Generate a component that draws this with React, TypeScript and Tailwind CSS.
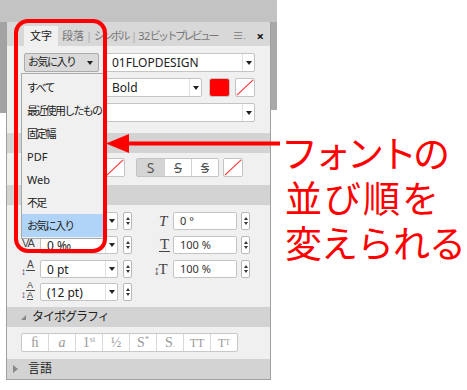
import React from "react";

const Caret = () => (
  <span className="block w-0 h-0 border-x-[3px] border-x-transparent border-t-[4px] border-t-[#222]" />
);

const Stepper = () => (
  <div className="w-[9px] h-[18px] rounded-[2px] border border-[#b8b8b8] bg-white flex flex-col items-center justify-center gap-[2px]">
    <span className="w-0 h-0 border-x-[2.5px] border-x-transparent border-b-[3px] border-b-[#333]" />
    <span className="w-0 h-0 border-x-[2.5px] border-x-transparent border-t-[3px] border-t-[#333]" />
  </div>
);

function Select({ value, className }: { value?: string; className: string }) {
  return (
    <div
      className={`flex bg-white border border-[#c4c4c4] rounded-[2px] ${className}`}
    >
      <div className="flex-1 pl-[6px] text-[12px] leading-[17px] text-[#222] whitespace-nowrap overflow-hidden">
        {value}
      </div>
      <div className="w-[12px] border-l border-[#e0e0e0] flex items-center justify-center">
        <Caret />
      </div>
    </div>
  );
}

function Field({ value }: { value: string }) {
  return (
    <div className="w-[64px] h-[18px] bg-white border border-[#c4c4c4] rounded-[2px] pl-[6px] text-[11px] leading-[16px] text-[#333]">
      {value}
    </div>
  );
}

function NoColor({ className }: { className: string }) {
  return (
    <div
      className={`relative bg-white border border-[#c4c4c4] rounded-[2px] overflow-hidden ${className}`}
    >
      <svg className="absolute inset-0 w-full h-full" preserveAspectRatio="none" viewBox="0 0 20 20">
        <line x1="1" y1="19" x2="19" y2="1" stroke="#ff3030" strokeWidth="1.2" />
      </svg>
    </div>
  );
}

function SectionHeader({ title, open }: { title: string; open?: boolean }) {
  return (
    <div className="h-[20px] bg-[#d3d3d3] flex items-center text-[12px] text-[#222]">
      {open ? (
        <span className="ml-[14px] w-0 h-0 border-l-[5px] border-l-transparent border-b-[5px] border-b-[#888]" />
      ) : (
        <span className="ml-[6px] w-0 h-0 border-y-[4px] border-y-transparent border-l-[5px] border-l-[#888]" />
      )}
      <span className={open ? "ml-[6px] tracking-[-1px]" : "ml-[10px]"}>{title}</span>
    </div>
  );
}

export default function App() {
  const fontItems = [
    { label: "すべて", cjk: true },
    { label: "最近使用したもの", cjk: true },
    { label: "固定幅", cjk: true },
    { label: "PDF", cjk: false },
    { label: "Web", cjk: false },
    { label: "不足", cjk: true },
    { label: "お気に入り", cjk: true },
  ];

  return (
    <div className="relative w-[467px] h-[390px] bg-white overflow-hidden font-['Noto_Sans','Noto_Sans_CJK_JP',sans-serif]">
      {/* app chrome above the panel */}
      <div className="w-[277px] h-[22px] bg-[#c3c3c3]" />

      <div className="flex items-start">
        <div className="w-[6px] h-[91px] bg-[#a3a3a3]" />

        {/* character panel */}
        <div className="w-[265px] h-[358px] border-x border-b border-[#a0a0a0] bg-[#f0f0f0] flex flex-col">
          {/* tabs */}
          <div className="h-[24px] bg-[#d8d8d8] flex items-end text-[11px] whitespace-nowrap">
            <div className="ml-[17px] h-[20px] px-[6px] bg-[#f0f0f0] text-[#222] leading-[20px]">文字</div>
            <div className="flex items-center h-[20px] text-[#777] leading-[20px]">
              <span className="ml-[4px]">段落</span>
              <span className="mx-[2px] text-[#aaa]">|</span>
              <span className="tracking-[-2.5px]">シンボル</span>
              <span className="ml-[3px] mr-[1px] text-[#aaa]">|</span>
              <span className="tracking-[-0.5px]">32</span>
              <span className="tracking-[-2.6px]">ビットプレビュー</span>
            </div>
            <div className="ml-auto h-[20px] flex items-center text-[#777] text-[11px]">
              <span>≡</span>
              <span className="text-[8px]">.</span>
            </div>
            <div className="ml-[11px] mr-[6px] h-[20px] leading-[20px] text-[13px] font-bold text-[#111]">×</div>
          </div>

          {/* font family */}
          <div className="mt-[7px] h-[19px] flex">
            <div className="ml-[17px] w-[75px] h-[19px] bg-[#dadada] border border-[#ababab] rounded-[2px] flex items-center pl-[3px] pr-[5px] text-[11px] tracking-[-1.5px] whitespace-nowrap text-[#222]">
              <span>お気に入り</span>
              <span className="ml-auto">
                <Caret />
              </span>
            </div>
            <Select value="01FLOPDESIGN" className="ml-[6px] w-[150px] h-[19px]" />
          </div>

          {/* style + colours */}
          <div className="mt-[6px] h-[19px] flex">
            <Select value="Bold" className="ml-[98px] w-[97px] h-[19px]" />
            <div className="ml-[7px] w-[21px] h-[19px] rounded-[3px] border border-[#c4c4c4] bg-[#ff0000]" />
            <NoColor className="ml-[5px] w-[20px] h-[19px]" />
          </div>

          <div className="mt-[6px] h-[19px] flex">
            <Select className="ml-[98px] w-[150px] h-[19px]" />
          </div>

          <div className="mt-[11px]">
            <SectionHeader title="文字の装飾" open />
          </div>

          <div className="mt-[5px] h-[19px] flex">
            <NoColor className="ml-[98px] w-[20px] h-[19px]" />
            <div className="ml-[11px] flex h-[19px] border border-[#c4c4c4] rounded-[2px] text-[14px] text-[#555]">
              <div className="w-[27px] bg-[#d4d4d4] flex items-center justify-center">S</div>
              <div className="w-[27px] bg-white border-l border-[#d0d0d0] flex items-center justify-center relative">
                S<span className="absolute left-[9px] right-[9px] top-[9px] h-px bg-[#555]" />
              </div>
              <div className="w-[27px] bg-white border-l border-[#d0d0d0] flex items-center justify-center relative">
                S
                <span className="absolute left-[9px] right-[9px] top-[7px] h-px bg-[#555]" />
                <span className="absolute left-[9px] right-[9px] top-[10px] h-px bg-[#555]" />
              </div>
            </div>
            <NoColor className="ml-[4px] w-[20px] h-[19px]" />
          </div>

          <div className="mt-[8px]">
            <SectionHeader title="文字の間隔" open />
          </div>

          {/* spacing rows */}
          {[
            { l: "", r: "0 °" },
            { l: "0 ‰", r: "100 %" },
            { l: "0 pt", r: "100 %" },
            { l: "(12 pt)", r: "" },
          ].map((row, i) => (
            <div key={i} className={`${i === 3 ? "mt-[5px]" : i === 0 ? "mt-[7px]" : "mt-[6px]"} h-[18px] flex items-center`}>
              <div className="ml-[10px] w-[23px] h-[18px] relative text-[#444] font-['Liberation_Serif',serif]">
                {i === 1 && (
                  <>
                    <span className="absolute left-[5px] top-[-1px] text-[11px] font-['Liberation_Sans',sans-serif] tracking-[-1px]">VA</span>
                    <span className="absolute left-[5px] top-[14px] w-[13px] h-px bg-[#444]" />
                  </>
                )}
                {i === 2 && (
                  <>
                    <span className="absolute left-[4px] top-[4px] text-[10px]">↕</span>
                    <span className="absolute left-[10px] top-[-3px] text-[10px] font-['Liberation_Sans',sans-serif]">A</span>
                    <span className="absolute left-[9px] top-[10px] w-[9px] h-px bg-[#444]" />
                  </>
                )}
                {i === 3 && (
                  <>
                    <span className="absolute left-[4px] top-[4px] text-[10px]">↕</span>
                    <span className="absolute left-[10px] top-[-4px] text-[9px] font-['Liberation_Sans',sans-serif]">A</span>
                    <span className="absolute left-[9px] top-[7px] w-[9px] h-px bg-[#444]" />
                    <span className="absolute left-[10px] top-[6px] text-[9px] font-['Liberation_Sans',sans-serif] underline">A</span>
                  </>
                )}
              </div>
              <Select value={row.l} className="w-[78px] h-[18px]" />
              <div className="ml-[5px]">
                <Stepper />
              </div>
              {row.r && (
                <>
                  <div className="ml-[27px] w-[14px] h-[18px] relative text-[15px] text-[#444] font-['Liberation_Serif',serif] leading-[18px]">
                    {i === 0 && <span className="absolute left-0 top-0 italic">T</span>}
                    {i === 1 && (
                      <>
                        <span className="absolute left-[1px] top-[-1px]">T</span>
                        <span className="absolute left-0 top-[15px] w-[11px] h-px bg-[#444]" />
                      </>
                    )}
                    {i === 2 && (
                      <span className="absolute left-[-5px] top-0 tracking-[-1px]">
                        <span className="text-[11px]">↨</span>T
                      </span>
                    )}
                  </div>
                  <Field value={row.r} />
                  <div className="ml-[4px]">
                    <Stepper />
                  </div>
                </>
              )}
            </div>
          ))}

          <div className="mt-[6px]">
            <SectionHeader title="タイポグラフィ" open />
          </div>

          <div className="mt-[6px] ml-[14px] flex h-[19px] w-[217px] border border-[#c8c8c8] rounded-[2px] bg-white text-[#9a9a9a] font-['Liberation_Serif',serif] text-[14px]">
            <div className="flex-1 flex items-center justify-center">ﬁ</div>
            <div className="flex-1 flex items-center justify-center border-l border-[#d8d8d8] italic">a</div>
            <div className="flex-1 flex items-center justify-center border-l border-[#d8d8d8]">
              1<span className="text-[8px] -mt-[6px]">st</span>
            </div>
            <div className="flex-1 flex items-center justify-center border-l border-[#d8d8d8]">½</div>
            <div className="flex-1 flex items-center justify-center border-l border-[#d8d8d8]">
              S<span className="text-[8px] -mt-[6px]">*</span>
            </div>
            <div className="flex-1 flex items-center justify-center border-l border-[#d8d8d8]">
              S<span className="text-[9px] mt-[4px]">.</span>
            </div>
            <div className="flex-1 flex items-center justify-center border-l border-[#d8d8d8] text-[12px]">TT</div>
            <div className="flex-1 flex items-center justify-center border-l border-[#d8d8d8] text-[12px]">
              T<span className="text-[8px]">T</span>
            </div>
          </div>

          <div className="mt-[7px]">
            <SectionHeader title="言語" />
          </div>
        </div>

        <div className="w-[6px] h-[88px] bg-[#a8a8a8]" />
      </div>

      {/* open font-filter list */}
      <div className="absolute left-[21px] top-[73px] w-[84px] pt-[2px] pb-[1px] bg-[#f0f0f0] border border-[#a9a9a9] text-[11px] text-[#222]">
        {fontItems.map((item, i) => (
          <div
            key={item.label}
            className={`h-[23px] leading-[23px] pl-[5px] whitespace-nowrap overflow-hidden ${item.cjk ? "tracking-[-1.7px]" : ""} ${i === fontItems.length - 1 ? "bg-[#b0d4f7]" : ""}`}
          >
            {item.label}
          </div>
        ))}
      </div>

      {/* annotation */}
      <div className="absolute left-[14px] top-[19px] w-[93px] h-[234px] border-[4px] border-[#ff0000] rounded-[14px]" />
      <svg className="absolute left-[104px] top-[132px]" width="178" height="24" viewBox="0 0 178 24">
        <polygon points="2,11.5 25,2 25,21" fill="#ff0000" />
        <rect x="20" y="9.5" width="156" height="4" fill="#ff0000" />
      </svg>
      <div className="absolute left-[281px] top-[130px] text-[37px] leading-[45px] text-[#ff0000] font-['Noto_Sans_CJK_JP',sans-serif] whitespace-nowrap">
        <div className="tracking-[-4px]">フォントの</div>
        <div className="pl-[4px] tracking-[2px]">並び順を</div>
        <div className="pl-[4px] tracking-[-1px]">変えられる</div>
      </div>
    </div>
  );
}
